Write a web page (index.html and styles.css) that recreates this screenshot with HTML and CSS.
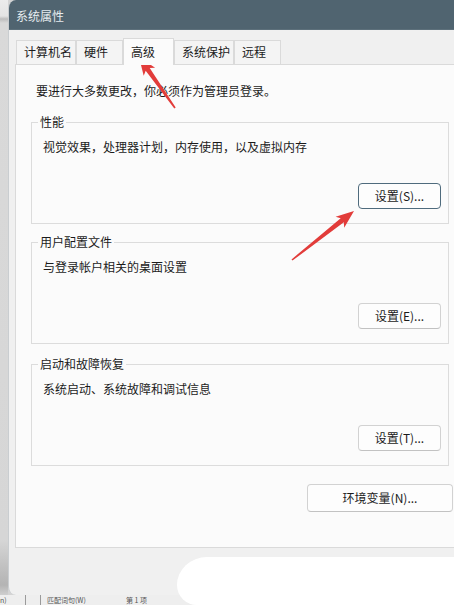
FILE: index.html
```html
<!DOCTYPE html>
<html lang="zh-CN">
<head>
<meta charset="utf-8">
<title>系统属性</title>
<link rel="stylesheet" href="styles.css">
</head>
<body>
<div class="screen">
  <div class="backdrop-left"></div>
  <div class="window">
    <div class="titlebar">系统属性</div>
    <div class="tabs">
      <div class="tab wide">计算机名</div>
      <div class="tab">硬件</div>
      <div class="tab selected">高级</div>
      <div class="tab wide">系统保护</div>
      <div class="tab">远程</div>
    </div>
    <div class="panel">
      <p class="notice">要进行大多数更改，你必须作为管理员登录。</p>
      <fieldset class="group first">
        <legend>性能</legend>
        <p class="desc">视觉效果，处理器计划，内存使用，以及虚拟内存</p>
        <div class="actions"><button class="btn focused">设置(S)...</button></div>
      </fieldset>
      <fieldset class="group second">
        <legend>用户配置文件</legend>
        <p class="desc">与登录帐户相关的桌面设置</p>
        <div class="actions"><button class="btn">设置(E)...</button></div>
      </fieldset>
      <fieldset class="group third">
        <legend>启动和故障恢复</legend>
        <p class="desc">系统启动、系统故障和调试信息</p>
        <div class="actions"><button class="btn">设置(T)...</button></div>
      </fieldset>
      <div class="env-row"><button class="btn env">环境变量(N)...</button></div>
    </div>
  </div>
  <div class="backdrop-bottom">
    <span class="cut">n)</span>
    <span class="sep"></span>
    <span class="sep second-sep"></span>
    <span class="find">匹配词句(W)</span>
    <span class="count">第 1 项</span>
  </div>
</div>
<div class="blob"></div>
<svg class="arrows" width="454" height="605" viewBox="0 0 454 605">
  <polygon points="139,57 155.1,67.7 149.7,67.9 175.7,107.5 174.3,108.5 145.7,70.7 143.7,75.7" fill="#e23c3a"/>
  <polygon points="354,211 344.2,227.7 343.8,222.3 292.5,260.6 291.5,259.4 340.7,218.3 335.6,216.7" fill="#e23c3a"/>
</svg>
</body>
</html>
```

FILE: styles.css
```css
* { box-sizing: border-box; }
html, body {
  margin: 0;
  padding: 0;
}
body {
  width: 454px;
  height: 605px;
  overflow: hidden;
  position: relative;
  background: #d4d4d4;
  font-family: "Noto Sans CJK SC", "Microsoft YaHei", sans-serif;
  font-size: 12px;
  color: #1b1b1b;
}
.screen {
  display: grid;
  grid-template-columns: 8px 446px;
  grid-template-rows: 595px 10px;
  width: 454px;
  height: 605px;
  overflow: hidden;
}
.backdrop-left {
  grid-column: 1;
  grid-row: 1;
  background: linear-gradient(to bottom, #ececec 0px, #e4e4e4 16px, #bdbdbd 19px, #d9d9d9 23px, #d6d6d6 540px, #c2c2c2 565px, #b4b4b4 585px, #cfcfcf 595px);
}
.window {
  grid-column: 2;
  grid-row: 1;
  background: #f0f0f0;
  border-radius: 8px 0 0 8px;
  overflow: hidden;
  border-left: 1px solid #c9cdd0;
  display: flex;
  flex-direction: column;
}
.titlebar {
  height: 30px;
  flex: none;
  background: #506470;
  color: #e6ecef;
  line-height: 31px;
  padding-left: 7px;
  border-bottom: 1px solid #5d707b;
}
.tabs {
  display: flex;
  align-items: flex-end;
  margin-top: 8px;
  padding-left: 7px;
  height: 26px;
  flex: none;
}
.tab {
  height: 24px;
  min-width: 47px;
  padding: 0 5px 0 7px;
  line-height: 22px;
  background: #f4f4f4;
  border: 1px solid #dadada;
  border-bottom: none;
  white-space: nowrap;
}
.tab.wide {
  padding-right: 3px;
}
.tab.selected {
  height: 27px;
  min-width: 51px;
  line-height: 25px;
  background: #fbfbfb;
  margin-bottom: -1px;
  position: relative;
  z-index: 1;
}
.panel {
  margin-left: 6px;
  height: 484px;
  flex: none;
  background: #fbfbfb;
  border: 1px solid #dadada;
  border-right: none;
  display: flex;
  flex-direction: column;
}
.notice {
  margin: 17px 0 0 20px;
  line-height: 18px;
}
.group {
  margin: 11px 0 0 15px;
  padding: 0;
  width: 418px;
  border: 1px solid #dcdcdc;
  min-inline-size: 0;
}
.group.first { margin-top: 14px; }
.group.second { margin-top: 10px; }
.group.third { margin-top: 12px; }
.group legend {
  margin-left: 6px;
  padding: 0 2px;
  line-height: 16px;
}
.desc {
  margin: 8px 0 0 11px;
  line-height: 18px;
}
.actions {
  display: flex;
  justify-content: flex-end;
  margin-top: 27px;
  padding: 0 7px 14px 0;
}
.btn {
  width: 83px;
  height: 26px;
  padding: 0;
  font: inherit;
  color: #1b1b1b;
  background: #fdfdfd;
  border: 1px solid #d2d2d2;
  border-bottom-color: #c2c2c2;
  border-radius: 4px;
  line-height: 24px;
}
.btn.focused {
  border: 1px solid #4f6b7d;
}
.env-row {
  display: flex;
  justify-content: flex-end;
  margin-top: 18px;
  padding-right: 1px;
}
.btn.env {
  width: 146px;
  height: 28px;
}
.backdrop-bottom {
  grid-column: 1 / 3;
  grid-row: 2;
  height: 10px;
  background: #eeeeee;
  display: flex;
  align-items: center;
  color: #555;
  font-size: 7px;
  line-height: 9px;
}
.cut { width: 25px; }
.sep {
  width: 1px;
  height: 10px;
  background: #9a9a9a;
}
.second-sep { margin-left: 14px; }
.find { margin-left: 6px; }
.count { margin-left: 40px; }
.blob {
  position: absolute;
  left: 177px;
  top: 557px;
  width: 277px;
  height: 48px;
  border-radius: 30px 0 0 20px / 28px 0 0 20px;
  background: #ffffff;
}
.arrows {
  position: absolute;
  left: 0;
  top: 0;
  pointer-events: none;
}
```
